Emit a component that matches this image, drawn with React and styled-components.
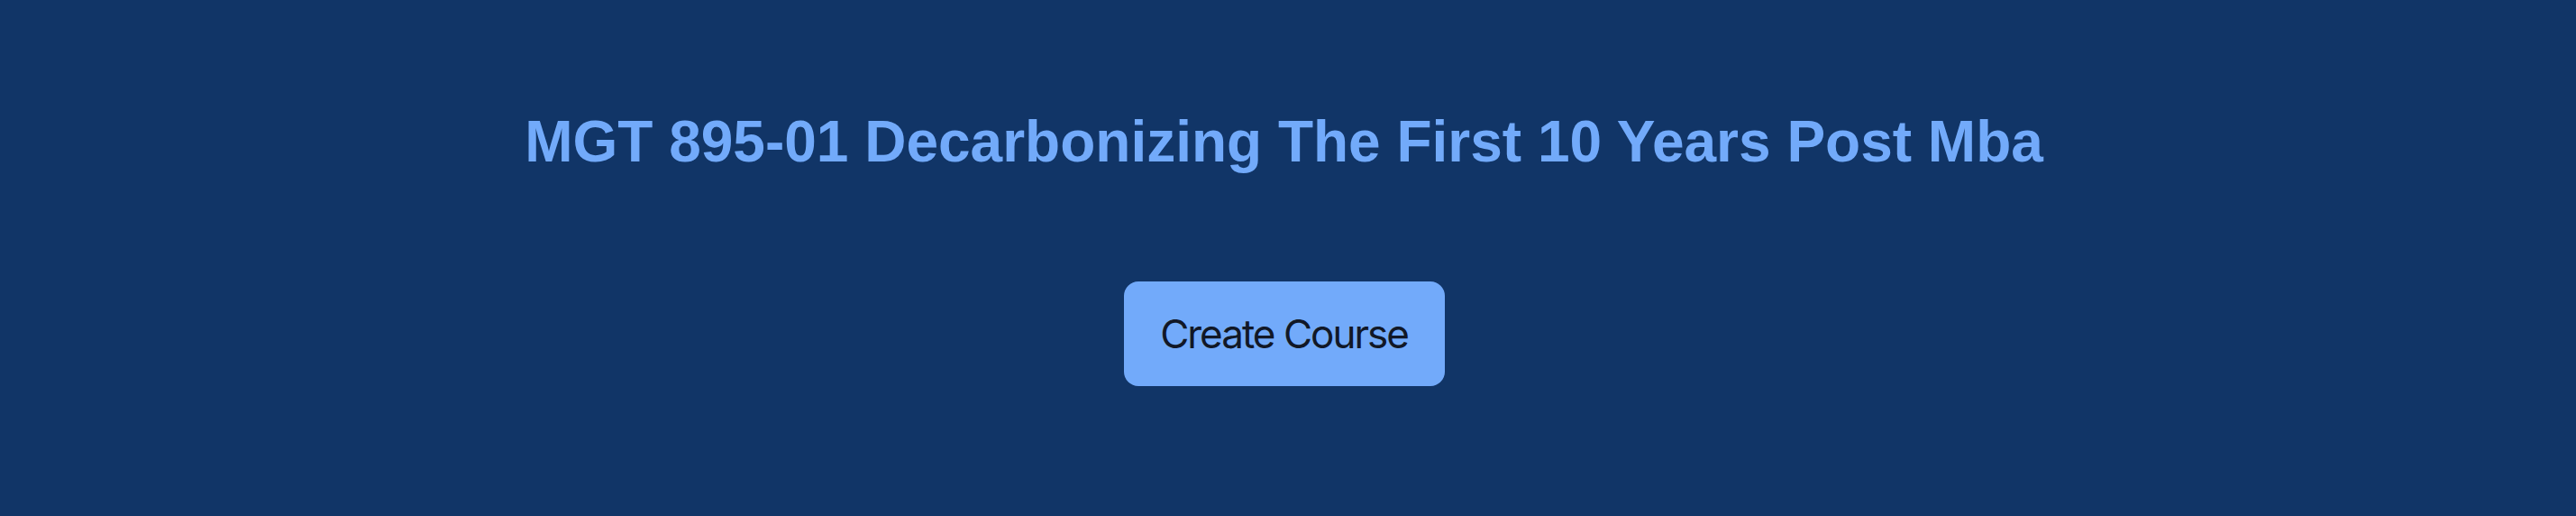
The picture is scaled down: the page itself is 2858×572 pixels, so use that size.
import React from "react";
import styled, { createGlobalStyle } from "styled-components";

const GlobalStyle = createGlobalStyle`
  html, body {
    margin: 0;
    padding: 0;
    background-color: #113567;
  }
`;

const Page = styled.div`
  width: 100%;
  height: 572px;
  box-sizing: border-box;
  background-color: #113567;
  display: flex;
  flex-direction: column;
  align-items: center;
  padding-top: 117px;
  padding-right: 9px;
`;

const Title = styled.h1`
  margin: 0;
  font-family: "Liberation Sans", Arial, sans-serif;
  font-weight: 700;
  font-size: 64px;
  line-height: 80px;
  color: #72aafa;
  text-align: center;
`;

const CreateButton = styled.button`
  margin-top: 115px;
  width: 356px;
  height: 116px;
  border: 0;
  outline: 0;
  border-radius: 16px;
  background-color: #72aafa;
  color: #111827;
  font-family: Inter, "Noto Sans", sans-serif;
  font-size: 44px;
  letter-spacing: -2px;
  cursor: pointer;
`;

function App() {
  return (
    <>
      <GlobalStyle />
      <Page>
        <Title>MGT 895-01 Decarbonizing The First 10 Years Post Mba</Title>
        <CreateButton>Create Course</CreateButton>
      </Page>
    </>
  );
}

export default App;
